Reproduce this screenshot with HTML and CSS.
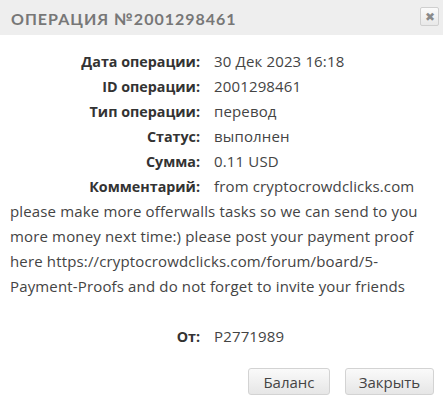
FILE: index.html
```html
<!DOCTYPE html>
<html lang="ru">
<head>
<meta charset="utf-8">
<link rel="stylesheet" href="styles.css">
</head>
<body>
<div class="dialog">
  <div class="titlebar">
    <span class="title">Операция №2001298461</span>
    <span class="close">&#x2716;</span>
  </div>
  <div class="content">
    <div class="row"><span class="label">Дата операции:</span>30 Дек 2023 16:18</div>
    <div class="row"><span class="label">ID операции:</span>2001298461</div>
    <div class="row"><span class="label">Тип операции:</span>перевод</div>
    <div class="row"><span class="label">Статус:</span>выполнен</div>
    <div class="row"><span class="label">Сумма:</span>0.11 USD</div>
    <div class="row"><span class="label">Комментарий:</span>from cryptocrowdclicks.com please make more offerwalls tasks so we can send to you more money next time:) please post your payment proof here https://cryptocrowdclicks.com/forum/board/5-Payment-Proofs and do not forget to invite your friends</div>
    <div class="row from"><span class="label">От:</span>P2771989</div>
  </div>
  <div class="buttons">
    <button class="btn btn-balance">Баланс</button>
    <button class="btn btn-close">Закрыть</button>
  </div>
</div>
</body>
</html>
```
FILE: styles.css
```css
html, body {
  margin: 0;
  padding: 0;
  background: #fff;
}
body {
  font-family: "Open Sans", "Lato", sans-serif;
  color: #333;
  width: 443px;
  height: 407px;
  overflow: hidden;
}
.titlebar {
  height: 35px;
  background: #eeeeee;
  display: flex;
  align-items: center;
  justify-content: space-between;
  padding: 0 4px 0 11px;
}
.title {
  font-family: "Lato", sans-serif;
  text-transform: uppercase;
  font-size: 16px;
  font-weight: 700;
  letter-spacing: 1px;
  color: #777;
  margin-top: 1px;
}
.close {
  width: 17px;
  height: 17px;
  border: 1px solid #cfcfcf;
  border-radius: 2px;
  background: linear-gradient(#fbfbfb, #e8e8e8);
  color: #8a8a8a;
  font-size: 12px;
  line-height: 17px;
  text-align: center;
  margin-top: -2px;
}
.content {
  padding: 14px 10px 0 10px;
  font-size: 15px;
  line-height: 25px;
  letter-spacing: 0.15px;
  color: #444;
}
.label {
  display: inline-block;
  width: 190px;
  text-align: right;
  font-size: 14.3px;
  letter-spacing: 0;
  font-weight: 700;
  color: #333;
  margin-right: 14px;
}
.from {
  margin-top: 25px;
}
.buttons {
  display: flex;
  justify-content: flex-end;
  gap: 15px;
  padding: 19px 9px 0 0;
}
.btn {
  font-family: inherit;
  font-size: 15px;
  color: #444;
  height: 27px;
  border: 1px solid #d3d3d3;
  border-radius: 3px;
  background: linear-gradient(#fafafa, #e6e6e6);
  padding: 0;
}
.btn-balance { width: 82px; }
.btn-close { width: 89px; }
```
